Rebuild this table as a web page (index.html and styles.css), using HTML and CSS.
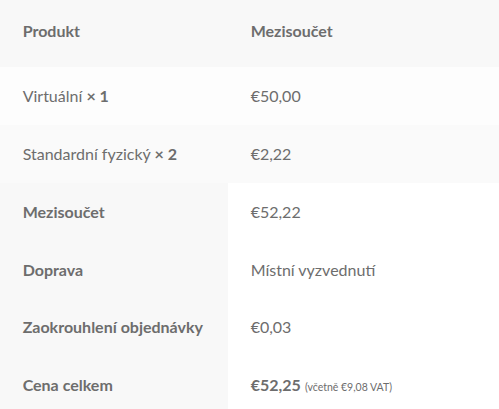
FILE: index.html
```html
<!DOCTYPE html>
<html lang="cs">
<head>
<meta charset="utf-8">
<title>Objednávka</title>
<link rel="stylesheet" href="styles.css">
</head>
<body>
<table class="shop-table">
  <thead>
    <tr>
      <th class="col-name">Produkt</th>
      <th class="col-total">Mezisoučet</th>
    </tr>
  </thead>
  <tbody>
    <tr class="item">
      <td>Virtuální&nbsp;<strong class="qty">×&nbsp;1</strong></td>
      <td>€50,00</td>
    </tr>
    <tr class="item">
      <td>Standardní fyzický&nbsp;<strong class="qty">×&nbsp;2</strong></td>
      <td>€2,22</td>
    </tr>
  </tbody>
  <tfoot>
    <tr>
      <th>Mezisoučet</th>
      <td>€52,22</td>
    </tr>
    <tr>
      <th>Doprava</th>
      <td>Místní vyzvednutí</td>
    </tr>
    <tr>
      <th>Zaokrouhlení objednávky</th>
      <td>€0,03</td>
    </tr>
    <tr>
      <th>Cena celkem</th>
      <td><strong class="grand">€52,25</strong> <small class="tax">(včetně €9,08 VAT)</small></td>
    </tr>
  </tfoot>
</table>
</body>
</html>
```
FILE: styles.css
```css
html, body {
  margin: 0;
  padding: 0;
  background: #ffffff;
}

body {
  font-family: Lato, "Liberation Sans", sans-serif;
  font-size: 16px;
  line-height: 1.618;
  color: #6d6d6d;
}

.shop-table {
  width: 499px;
  border-collapse: collapse;
  border-spacing: 0;
  table-layout: fixed;
}

.shop-table th,
.shop-table td {
  box-sizing: border-box;
  padding: 16px 22.65px;
  text-align: left;
  vertical-align: top;
}

.col-name {
  width: 228px;
}

.shop-table th {
  font-weight: 700;
  background: #f8f8f8;
}

.shop-table thead th {
  padding-top: 18px;
  padding-bottom: 23px;
}

.shop-table tbody td {
  background: #fdfdfd;
}

.shop-table tbody tr:nth-child(2n) td {
  background: #fafafa;
}

.shop-table tfoot td {
  background: #ffffff;
}

.qty {
  font-weight: 700;
}

.grand {
  font-weight: 700;
}

.tax {
  font-size: 10.5px;
}
```
